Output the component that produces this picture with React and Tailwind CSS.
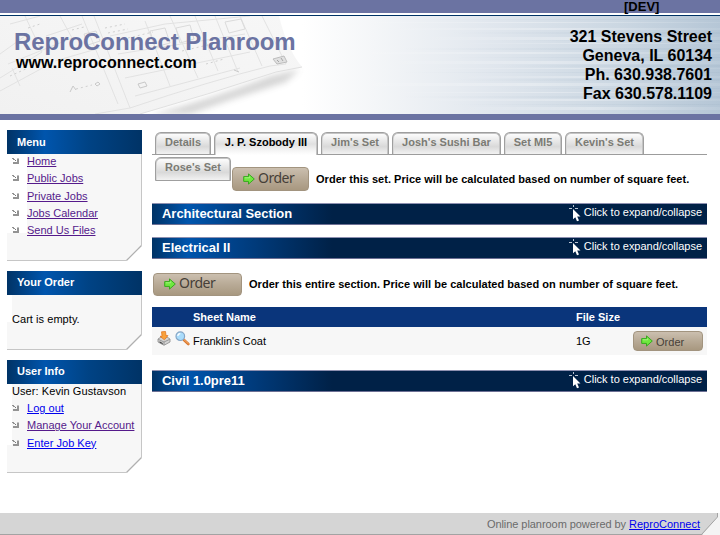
const Bullet = () => (
  <svg width="8" height="8" viewBox="0 0 8 8" className="shrink-0" shapeRendering="crispEdges">
    <path d="M0 1h2v1h1v1h-2v-1h-1zM5 1h2v6h-6v-2h4z" fill="#939393" />
    <path d="M3 3h1v1h-1z" fill="#777" />
    <path d="M5 1h2v1h-2z" fill="#c4c4c4" />
  </svg>
);

const Arrow = () => (
  <svg width="12" height="12" viewBox="0 0 12 12" className="shrink-0">
    <path d="M.7 3.6h4.8V.9L11.3 6l-5.8 5.1V8.4H.7z" fill="#6fe83f" stroke="#38a81f" strokeWidth="1" strokeLinejoin="round" />
    <path d="M1.7 4.8h5V3.4" fill="none" stroke="#aef78a" strokeWidth=".8" />
  </svg>
);

const Cursor = () => (
  <svg width="12" height="17" viewBox="0 0 12 17" className="shrink-0">
    <path d="M0 3.5h3M6 3.5h3M4.5 0v2" stroke="#b9c4d3" strokeWidth="1" />
    <path d="M4 4v10.3l2.3-2.1 1.7 4.1 2-.9-1.8-3.8h3.3z" fill="#fff" />
  </svg>
);

const PrinterIcon = () => (
  <svg width="14" height="15" viewBox="0 0 14 15" className="shrink-0">
    <path d="M1 8l3-2h6l3 2v3l-6 3.3L1 11z" fill="#d4d4d4" stroke="#888" strokeWidth=".8" />
    <path d="M1.4 8.4L7 11l5.6-2.6M7 11v3" stroke="#888" fill="none" strokeWidth=".8" />
    <path d="M2.5 10.3l3.2 1.7v1.2l-3.2-1.6z" fill="#444" />
    <path d="M4.5.8l4-.4.5 4.2h2L7.4 8.8 3 5.3h2z" fill="#f9a13c" stroke="#e0701a" strokeWidth=".7" />
  </svg>
);

const SearchIcon = () => (
  <svg width="15" height="15" viewBox="0 0 15 15" className="shrink-0">
    <path d="M9 9l4.3 4" stroke="#d9762b" strokeWidth="2.6" strokeLinecap="round" />
    <path d="M9.3 8.9l4 3.7" stroke="#f7b273" strokeWidth="1" strokeLinecap="round" />
    <circle cx="5.3" cy="5.2" r="4.3" fill="#a9dcfb" stroke="#86a6c6" strokeWidth="1.2" />
    <path d="M2.8 5a2.6 2.6 0 0 1 2.5-2.3" stroke="#fff" strokeWidth="1.2" fill="none" />
  </svg>
);

const BannerArt = () => (
  <svg className="absolute inset-0" width="720" height="98" viewBox="0 0 720 98">
    <defs>
      <linearGradient id="steel" x1="0" x2="1" y1="0" y2="0">
        <stop offset=".42" stopColor="#fff" />
        <stop offset=".52" stopColor="#f4f6f8" />
        <stop offset=".68" stopColor="#e1e7ee" />
        <stop offset=".86" stopColor="#cbd7e2" />
        <stop offset="1" stopColor="#b5c6d6" />
      </linearGradient>
      <linearGradient id="streak" x1="0" x2="1" y1="0" y2="0">
        <stop offset="0" stopColor="#fff" stopOpacity="0" />
        <stop offset=".5" stopColor="#fff" stopOpacity=".3" />
        <stop offset="1" stopColor="#fff" stopOpacity=".08" />
      </linearGradient>
      <linearGradient id="dim" x1="0" x2="1" y1="0" y2="0">
        <stop offset="0" stopColor="#9fb4c6" stopOpacity="0" />
        <stop offset="1" stopColor="#9fb4c6" stopOpacity=".22" />
      </linearGradient>
      <linearGradient id="paper" x1="0" x2="1" y1="1" y2="0">
        <stop offset="0" stopColor="#f1f1f1" />
        <stop offset="1" stopColor="#f7f7f7" />
      </linearGradient>
      <filter id="soft"><feGaussianBlur stdDeviation="3" /></filter>
      <clipPath id="sheet"><path d="M0 0H279Q287 33 302 51L276 56Q210 78 140 98H0z" /></clipPath>
    </defs>
    <rect width="720" height="98" fill="url(#steel)" />
    {[6, 12, 21, 27, 36, 45, 52, 60, 67, 76, 83, 91].map((y, i) => (
      <rect key={y} x={340 + (i % 4) * 40} y={y} width={380 - (i % 4) * 40} height={1 + (i % 3)} fill="url(#streak)" />
    ))}
    {[3, 16, 24, 32, 41, 49, 56, 63, 72, 80, 88].map((y, i) => (
      <rect key={y} x={400 + (i % 3) * 50} y={y} width={320 - (i % 3) * 50} height={1 + (i % 2)} fill="url(#dim)" />
    ))}
    <path d="M150 99Q215 82 270 60L300 53L286 66L230 84L190 98z" fill="#777" opacity=".3" filter="url(#soft)" />
    <path d="M0 0H279Q287 33 302 51L276 56Q210 78 140 98H0z" fill="url(#paper)" />
    <g clipPath="url(#sheet)" fill="none" stroke="#e2e2e2" strokeWidth="1">
      <path d="M262 0L286 48L270 50Q210 65 130 92M94 0L130 92M82 0L118 88M0 75L50 48M0 62L42 36L25 0M0 38L25 20M60 0L72 22L8 48M20 70L12 52M130 92L95 98M145 5L170 70M170 0L198 62M195 0L218 55M215 0L238 56M240 0L262 50M110 20L165 8L250 0M118 38L245 18M125 62L250 36M135 80L240 52M10 8L40 0M46 20L82 8M55 45L100 32" />
      <path d="M150 15l15-3 5 15-15 4zM176 12l14-3 4 14-14 4zM225 6l16-3 4 10-16 4zM84 18l12-3 4 10-12 4z" stroke="#dbdbdb" />
      <path d="M105 12l20-4M108 17l20-4M72 14l12-3M128 22l25-6M10 60l18-8M140 52l17-4M182 35l30-7M206 48l18-5M76 73l16-4M28 12l12-4" stroke="#cfcfcf" strokeDasharray="2 3" />
      <path d="M138 68l7-2 2 4-7 2zM95 68l3-2 2 2-3 2zM70 76l3-6 3 4M234 54l5 2" stroke="#c8c8c8" />
    </g>
    <path d="M273 43l11-3 3 6-10 2z" fill="#e0e0e0" stroke="#bdbdbd" />
    <path d="M277 44l2 2M281 42l2 3" stroke="#a5a5a5" />
    <path d="M302 51L276 56Q210 78 140 98" fill="none" stroke="#e0e0e0" />
  </svg>
);

const Panel = ({ title, titleClass = "leading-[22px]", bodyClass, children }) => (
  <section>
    <h2 className={"h-6 pl-[10px] text-[11px] font-bold text-white bg-[linear-gradient(90deg,#003366_0%,#0055ad_28%,#004385_60%,#003366_100%)] " + titleClass}>{title}</h2>
    <div className={"relative flow-root bg-[#f7f7f7] border-r border-b border-[#c6c6c6] " + bodyClass}>
      {children}
      <svg className="absolute -right-px -bottom-px" width="16" height="16" viewBox="0 0 16 16">
        <path d="M16 0V16H0z" fill="#fff" />
        <path d="M.5 15.5L15.5 .5" stroke="#b0b0b0" strokeWidth="1.2" />
      </svg>
    </div>
  </section>
);

const LinkRow = ({ children, fresh }) => (
  <li className="flex h-[17.25px] items-center gap-[7px] leading-[14px]">
    <Bullet />
    <a className={"underline " + (fresh ? "text-[#0000ee]" : "text-[#551a8b]")}>{children}</a>
  </li>
);

const Tab = ({ w, active, children }) => (
  <div className={"rounded-t-[6px] border border-b-0 border-[#9f9f9f] pt-px text-center font-bold leading-[17px] " + w + (active ? " h-[23px] text-black shadow-[inset_0_1px_0_#c4c4c4,inset_1px_0_0_#d0d0d0,inset_-1px_0_0_#c4c4c4] bg-[linear-gradient(180deg,#fff_0%,#e0e0e0_50%,#f5f5f5_80%,#fff_100%)]" : " h-[22px] text-[#7b7b74] shadow-[inset_0_1px_0_#c4c4c4,inset_1px_0_0_#d8d8d8,inset_-1px_0_0_#c4c4c4] bg-[linear-gradient(180deg,#fff_0%,#ededed_30%,#d9d9d9_65%,#f2f2f2_100%)]")}>
    {children}
  </div>
);

const OrderButton = ({ size, small }) => (
  <button className={"flex shrink-0 items-center rounded-[4px] border border-[#a2947f] bg-[linear-gradient(180deg,#cbbfaf_0%,#b8aa96_50%,#a89880_100%)] text-[#463f38] " + size + (small ? " gap-[3px] pl-[7px] text-[11px]" : " gap-[3px] pl-[10px] font-['Noto_Sans',sans-serif] text-[14px] tracking-[-.5px]")}>
    <Arrow />
    <span className={small ? "leading-[18px] pt-px tracking-[.04px]" : "leading-5 -mt-[2px]"}>Order</span>
  </button>
);

const SectionBar = ({ children }) => (
  <div className="flex h-[22px] justify-between border-t border-b border-t-[#8d90b0] border-b-[#6d7094] bg-[linear-gradient(90deg,#003366_0px,#0055ad_36px,#00428a_80px,#002147_180px)] pl-[10px] pr-[5px] text-white">
    <h3 className="text-[13px] font-bold leading-[20px] tracking-[-.03px]">{children}</h3>
    <div className="flex items-start gap-[3px]">
      <div className="pt-px"><Cursor /></div>
      <span className="leading-4 tracking-[-.02px]">Click to expand/collapse</span>
    </div>
  </div>
);

export default function App() {
  return (
    <div className="flex h-[535px] w-[720px] flex-col overflow-hidden bg-white font-['Liberation_Sans',Arial,sans-serif] text-[11px] text-black">
      <header className="shrink-0">
        <div className="h-[13px] bg-[#6b73a2] pl-[624px] text-[13px] font-bold leading-[13px]">[DEV]</div>
        <div className="h-[2px]" />
        <div className="h-px bg-[#003366]" />
        <div className="relative h-[98px]">
          <BannerArt />
          <div className="relative flex justify-between pr-2 pl-[13px] font-bold">
            <div className="pt-3">
              <h1 className="pl-px text-2xl leading-7 tracking-[-.05px] text-[#6b73a2]">ReproConnect Planroom</h1>
              <p className="pl-[3px] text-base leading-[14px]">www.reproconnect.com</p>
            </div>
            <address className="pt-[11px] text-right text-base leading-[19px] not-italic">
              321 Stevens Street<br />Geneva, IL 60134<br />Ph. 630.938.7601<br />Fax 630.578.1109
            </address>
          </div>
        </div>
        <div className="h-[6px] bg-[#6b73a2]" />
      </header>

      <div className="flex h-[393px] shrink-0 gap-[10px] pt-[10px] pl-[7px]">
        <aside className="flex w-[135px] flex-col gap-[10px]">
          <Panel title="Menu" titleClass="leading-6" bodyClass="h-[107px]">
            <div className="flow-root h-[79px] bg-[linear-gradient(90deg,#fff_20px,#f7f7f7_20px)] pl-[5px]">
              <ul className="-mt-[1.5px]">
                <LinkRow>Home</LinkRow>
                <LinkRow>Public Jobs</LinkRow>
                <LinkRow>Private Jobs</LinkRow>
                <LinkRow>Jobs Calendar</LinkRow>
                <LinkRow>Send Us Files</LinkRow>
              </ul>
            </div>
          </Panel>
          <Panel title="Your Order" bodyClass="h-[55px]">
            <p className="h-[27px] bg-[linear-gradient(90deg,#fff_5px,#f7f7f7_5px)] pt-[17px] pl-[5px] leading-[14px] tracking-[.05px]">Cart is empty.</p>
          </Panel>
          <Panel title="User Info" bodyClass="h-[89px]">
            <div className="h-[61px] bg-[linear-gradient(90deg,#fff_5px,#f7f7f7_5px)] pl-[5px]">
              <p className="h-[15.5px] leading-[14px] tracking-[.08px]">User: Kevin Gustavson</p>
              <ul className="whitespace-nowrap tracking-[.02px]">
                <LinkRow fresh>Log out</LinkRow>
                <LinkRow>Manage Your Account</LinkRow>
                <LinkRow fresh>Enter Job Key</LinkRow>
              </ul>
            </div>
          </Panel>
        </aside>

        <main className="w-[555px]">
          <div className="h-[25px] border-b border-[#9c9c9c] pt-[2px]">
            <nav className="flex gap-[3px] pl-[3px]">
              <Tab w="w-[56px]">Details</Tab>
              <Tab w="w-[104px] mb-[-1px]" active>J. P. Szobody III</Tab>
              <Tab w="w-[68px]">Jim's Set</Tab>
              <Tab w="w-[109px]">Josh's Sushi Bar</Tab>
              <Tab w="w-[58px]">Set MI5</Tab>
              <Tab w="w-[79px]">Kevin's Set</Tab>
            </nav>
          </div>
          <div className="flex h-12 pl-[3px]">
            <div className="mt-[2px] h-6 w-[76px] rounded-tl-[6px] rounded-tr-[4px] border border-[#9f9f9f] bg-[linear-gradient(180deg,#fff_0%,#ededed_30%,#d9d9d9_65%,#f2f2f2_100%)] text-center font-bold leading-[18px] text-[#7b7b74] shadow-[inset_0_1px_0_#c4c4c4,inset_1px_0_0_#d8d8d8,inset_-1px_0_0_#c4c4c4]">Rose's Set</div>
            <div className="ml-px flex h-6 items-center gap-[7px] mt-3">
              <OrderButton size="h-6 w-[77px]" />
              <b className="tracking-[.03px]">Order this set. Price will be calculated based on number of square feet.</b>
            </div>
          </div>
          <SectionBar>Architectural Section</SectionBar>
          <div className="h-3" />
          <SectionBar>Electrical II</SectionBar>
          <div className="flex h-12 items-center gap-[7px] pl-px pt-[2px]">
            <OrderButton size="h-[23px] w-[89px]" />
            <b className="tracking-[.03px]">Order this entire section. Price will be calculated based on number of square feet.</b>
          </div>
          <div className="flex h-5 items-center bg-[#0a357b] pl-[41px] font-bold text-white">
            <span className="w-[383px]">Sheet Name</span>
            <span>File Size</span>
          </div>
          <div className="flex h-7 items-center bg-[#f7f7f7] pl-[5px]">
            <div className="flex w-9 items-start gap-1 pb-[5px]">
              <PrinterIcon />
              <SearchIcon />
            </div>
            <span className="w-[383px]">Franklin's Coat</span>
            <span className="w-[57px]">1G</span>
            <OrderButton small size="h-5 w-[70px]" />
          </div>
          <div className="h-[15px]" />
          <SectionBar>Civil 1.0pre11</SectionBar>
        </main>
      </div>

      <footer className="relative h-[22px] shrink-0 border-b border-[#a3a3a3] bg-[#d5d5d5] pr-5 text-right leading-[22px] text-[#6b6b6b]">
        <span className="tracking-[-.06px]">Online planroom powered by</span> <a className="text-[#0000ee] underline">ReproConnect</a>
        <svg className="absolute right-0 -bottom-px" width="20" height="22" viewBox="0 0 20 22">
          <path d="M20 0v22H2L18 3V0z" fill="#f4f4f4" />
          <path d="M1.5 21.5L17.5 4V0" fill="none" stroke="#a3a3a3" />
        </svg>
      </footer>
    </div>
  );
}
